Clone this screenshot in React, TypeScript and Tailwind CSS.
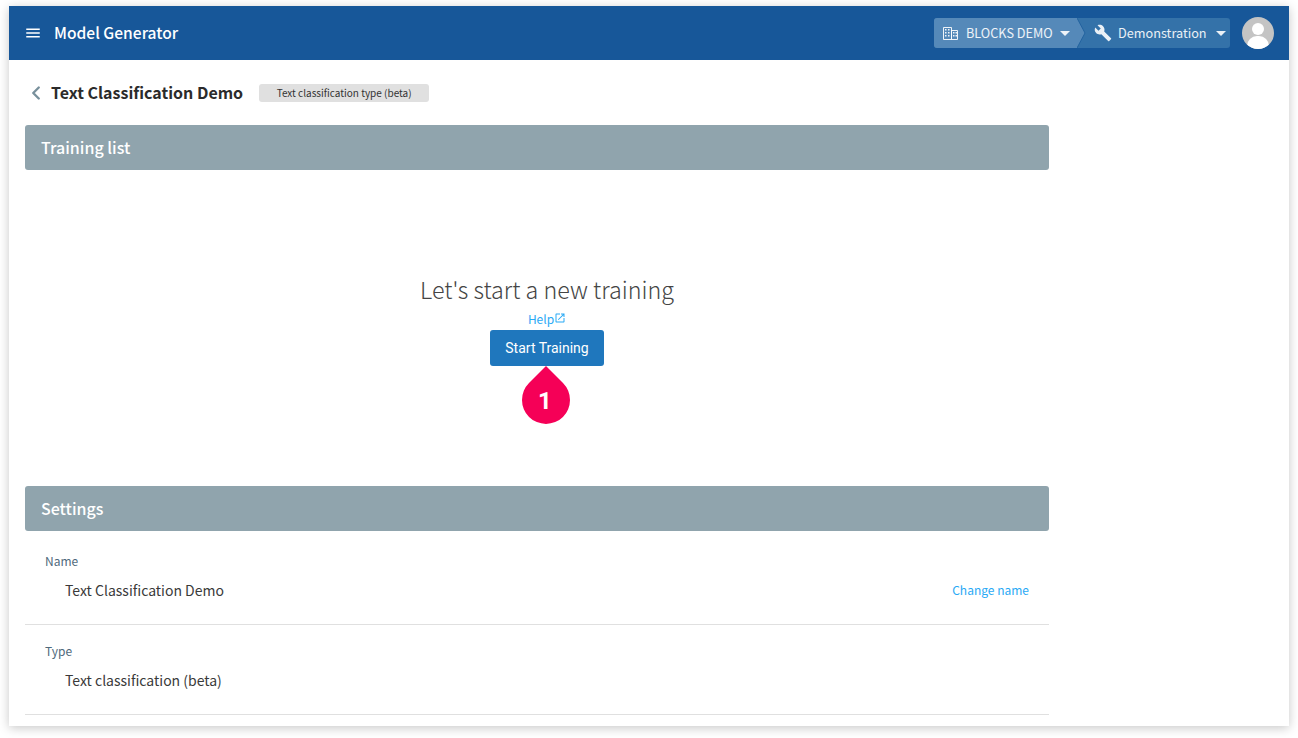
import React from 'react';
import { ChevronLeft } from 'lucide-react';

const MenuIcon = () => (
  <svg width="18" height="18" viewBox="0 0 24 24" fill="currentColor">
    <path d="M3 18h18v-2H3v2zm0-5h18v-2H3v2zm0-7v2h18V6H3z" />
  </svg>
);

const WrenchIcon = () => (
  <svg width="18" height="18" viewBox="0 0 24 24" fill="currentColor">
    <path d="M22.7 19l-9.1-9.1c.9-2.3.4-5-1.5-6.9-2-2-5-2.4-7.4-1.3L9 6 6 9 1.6 4.7C.4 7.1.9 10.1 2.9 12.1c1.9 1.9 4.6 2.4 6.9 1.5l9.1 9.1c.4.4 1 .4 1.4 0l2.3-2.3c.5-.4.5-1.1.1-1.4z" />
  </svg>
);

const OpenInNewIcon = () => (
  <svg width="12" height="12" viewBox="0 0 24 24" fill="currentColor" className="mb-[3px]">
    <path d="M19 19H5V5h7V3H5c-1.11 0-2 .9-2 2v14c0 1.1.89 2 2 2h14c1.1 0 2-.9 2-2v-7h-2v7zM14 3v2h3.59l-9.83 9.83 1.41 1.41L19 6.41V10h2V3h-7z" />
  </svg>
);

const BuildingIcon = () => (
  <svg width="15" height="13" viewBox="0 0 15 13" fill="currentColor" className="shrink-0">
    <path d="M0.5 0.5h8v12h-8z M8.5 3.5h6v9h-6z" fill="none" stroke="currentColor" strokeWidth="1" />
    <path d="M2 2h1.5v1.5H2zM5 2h1.5v1.5H5zM2 5h1.5v1.5H2zM5 5h1.5v1.5H5zM2 8h1.5v1.5H2zM5 8h1.5v1.5H5zM10 5h1.5v1.5H10zM12.5 5H14v1.5h-1.5zM10 8h1.5v1.5H10zM12.5 8H14v1.5h-1.5z" />
  </svg>
);

const Caret = () => <span className="block h-0 w-0 shrink-0 border-x-[5px] border-t-[5px] border-x-transparent border-t-white/90" />;

const SectionBar = ({ title }: { title: string }) => (
  <div className="flex h-[45px] w-[1024px] items-center rounded-[3px] bg-[#90a4ad] px-4 pb-[2px] text-base font-medium text-white">{title}</div>
);

const SettingRow = ({ label, value, action, className }: { label: string; value: string; action?: string; className: string }) => (
  <div className={`border-b border-[#e0e0e0] pl-5 ${className}`}>
    <div className="text-xs leading-[20px] text-[#4f6a7c]">{label}</div>
    <div className="mt-[9px] flex items-center justify-between pl-5 pr-5 text-sm leading-[20px] text-[#3a3a3a]">
      <span>{value}</span>
      {action && <a className="text-xs text-[#29a9f5]">{action}</a>}
    </div>
  </div>
);

export default function App() {
  return (
    <div className="h-[738px] w-[1298px] overflow-hidden bg-white pl-[9px] pt-[6px] font-['Noto_Sans_CJK_JP','Noto_Sans',sans-serif]">
      <div className="h-[720px] w-[1280px] overflow-hidden bg-white shadow-[0_2px_10px_rgba(0,0,0,0.22)]">
        <header className="flex h-[54px] items-center bg-[#175799] pl-[15px] pr-[15px] text-white">
          <MenuIcon />
          <span className="ml-[12px] text-[15.6px] font-medium">Model Generator</span>
          <div className="ml-auto flex h-[30px] items-center rounded-[3px] bg-[#3472a9] text-[12.7px] text-white/90">
            <div className="relative flex h-full w-[143px] items-center rounded-l-[3px] bg-[#5589b9] pl-[9px]">
              <BuildingIcon />
              <span className="ml-2 whitespace-nowrap">BLOCKS DEMO</span>
              <span className="ml-[7px]"><Caret /></span>
              <svg className="absolute left-[143px] top-0" width="9" height="30" viewBox="0 0 9 30">
                <path d="M0 0 L8 15 L0 30 Z" fill="#5589b9" />
                <path d="M0 0 L8 15 L0 30" fill="none" stroke="#23639f" strokeWidth="1" />
              </svg>
            </div>
            <div className="flex h-full w-[153px] items-center pl-[17px]">
              <WrenchIcon />
              <span className="ml-[6px] whitespace-nowrap">Demonstration</span>
              <span className="ml-[9px]"><Caret /></span>
            </div>
          </div>
          <div className="relative ml-3 h-8 w-8 overflow-hidden rounded-full bg-[#c4c4c4]">
            <span className="absolute left-[10px] top-[6px] h-3 w-3 rounded-full bg-white" />
            <span className="absolute left-[5px] top-[19px] h-5 w-[22px] rounded-full bg-white" />
          </div>
        </header>

        <main className="pl-4">
          <div className="flex h-[65px] items-center">
            <ChevronLeft size={22} strokeWidth={2.6} className="text-[#78909c]" />
            <h1 className="ml-[4px] pb-[2px] text-base font-bold text-[#2b2b2b]">Text Classification Demo</h1>
            <span className="ml-[16px] flex h-[18px] w-[170px] items-center justify-center rounded-[3px] bg-[#e0e0e0] text-[10px] text-[#333]">Text classification type (beta)</span>
          </div>

          <SectionBar title="Training list" />

          <div className="flex h-[316px] w-[1024px] flex-col items-center pl-5 pt-[101px]">
            <h2 className="text-[23.3px] font-light leading-[36px] text-[#444]">Let's start a new training</h2>
            <a className="mt-[2px] flex h-[20px] items-center text-xs text-[#29a9f5]">
              Help
              <OpenInNewIcon />
            </a>
            <div className="relative mt-[1px]">
              <button className="h-9 w-[114px] rounded-[3px] bg-[#1f77bd] font-['Roboto',sans-serif] text-sm text-white">Start Training</button>
              <div className="absolute left-[32px] top-[36px] flex h-[48px] w-[48px] flex-col items-center">
                <svg width="48" height="58" viewBox="0 0 48 58" className="absolute top-0">
                  <path d="M24 0 L41 17 A24 24 0 1 1 7 17 Z" fill="#f50057" />
                </svg>
                <span className="relative mt-[18px] pr-[2px] font-['Roboto',sans-serif] text-[24px] font-bold leading-[34px] text-white">1</span>
              </div>
            </div>
          </div>

          <SectionBar title="Settings" />

          <div className="w-[1024px]">
            <SettingRow label="Name" value="Text Classification Demo" action="Change name" className="h-[94px] pt-[20px]" />
            <SettingRow label="Type" value="Text classification (beta)" className="h-[90px] pt-[16px]" />
          </div>
        </main>
      </div>
    </div>
  );
}
